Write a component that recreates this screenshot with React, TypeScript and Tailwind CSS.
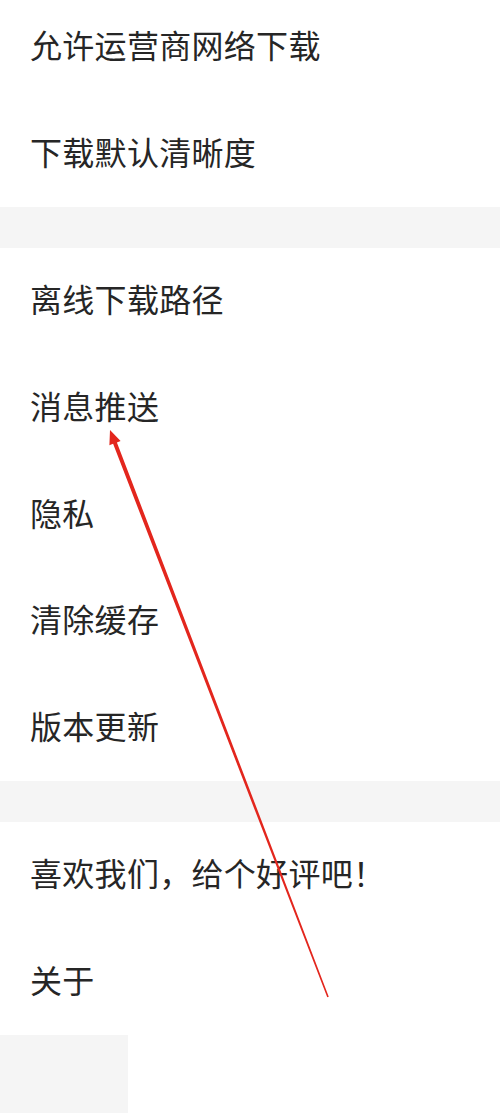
const sections: string[][] = [
  ["允许运营商网络下载", "下载默认清晰度"],
  ["离线下载路径", "消息推送", "隐私", "清除缓存", "版本更新"],
  ["喜欢我们，给个好评吧！", "关于"],
]

function Row({ label }: { label: string }) {
  return (
    <div className="flex h-[106.6px] items-center pb-[6px] pl-[30px] text-[32px] tracking-[0.3px] text-[#262626]">
      {label}
    </div>
  )
}

function Arrow() {
  return (
    <svg
      className="pointer-events-none absolute left-0 top-0"
      width="500"
      height="1113"
      viewBox="0 0 500 1113"
    >
      <polygon
        points="110,430 120.6,440.9 116.9,442.4 328.75,996.7 327.25,997.3 113.1,443.8 109.4,445.2"
        fill="#e3261d"
      />
    </svg>
  )
}

export default function App() {
  return (
    <div
      className="relative h-[1113px] w-[500px] overflow-hidden bg-white"
      style={{ fontFamily: '"Noto Sans CJK SC", "Noto Sans", sans-serif' }}
    >
      {/* top group, cut off by the crop */}
      <div className="-mt-[6px] bg-white">
        <Row label={sections[0][0]} />
        <Row label={sections[0][1]} />
      </div>
      <div className="h-[41px] bg-[#f5f5f5]" />
      <div className="bg-white">
        {sections[1].map((s) => (
          <Row key={s} label={s} />
        ))}
      </div>
      <div className="h-[41px] bg-[#f5f5f5]" />
      <div className="bg-white">
        {sections[2].map((s) => (
          <Row key={s} label={s} />
        ))}
      </div>
      <div className="flex h-[80px]">
        <div className="w-[128px] bg-[#f5f5f5]" />
        <div className="flex-1 bg-white" />
      </div>
      <Arrow />
    </div>
  )
}
